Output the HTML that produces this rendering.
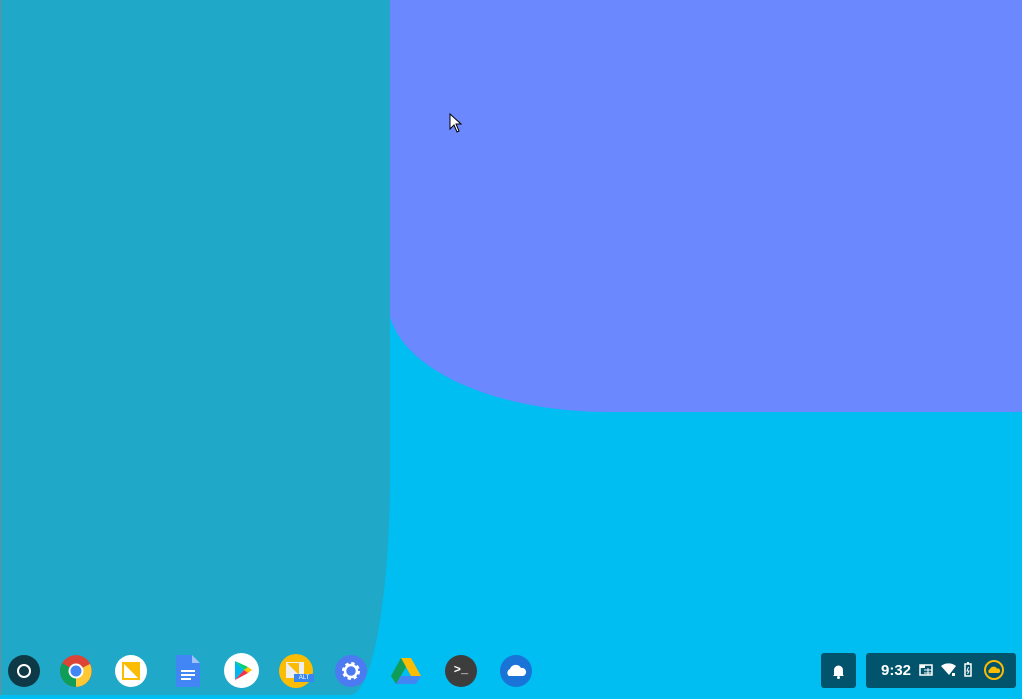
<!DOCTYPE html>
<html><head><style>
body{margin:0;width:1022px;height:695px;overflow:hidden;position:relative;background:#00bdf2;font-family:"Liberation Sans",sans-serif}
.a{position:absolute}
.ic{position:absolute;top:655px;width:32px;height:32px;border-radius:50%}
</style></head><body>
<div class="a" style="left:388px;top:0;width:640px;height:412px;background:#6b88fe;border-bottom-left-radius:220px 110px"></div>
<div class="a" style="left:0;top:0;width:390px;height:695px;background:#1fa8c8;border-bottom-right-radius:40px 220px"></div>
<div class="a" style="left:0;top:0;width:1px;height:695px;background:#6a8f99"></div>
<svg class="a" style="left:449px;top:113px" width="14" height="20"><path d="M1 1 L1 16 L5 12 L8 19 L10 18 L7 11 L12 11 Z" fill="#fff" stroke="#000" stroke-width="1"/></svg>

<div class="ic" style="left:8px;background:#0d3a46"><div class="a" style="left:9px;top:9px;width:10px;height:10px;border:2px solid #fff;border-radius:50%"></div></div>
<svg class="ic" style="left:60px" viewBox="0 0 32 32"><circle cx="16" cy="16" r="16" fill="#db4437"/><path d="M16 16 L30 9 A16 16 0 0 1 16 32 Z" fill="#fcc934"/><path d="M16 16 L16 32 A16 16 0 0 1 2 8 Z" fill="#0f9d58"/><circle cx="16" cy="16" r="7.5" fill="#fff"/><circle cx="16" cy="16" r="5.5" fill="#4285f4"/></svg>
<div class="ic" style="left:115px;background:#fff"><svg width="32" height="32"><rect x="8" y="8" width="16" height="16" fill="none" stroke="#fbbc04" stroke-width="2"/><path d="M9 9 L23 23 L23 9 Z" fill="#fbbc04"/></svg></div>
<svg class="ic" style="left:172px;border-radius:0" viewBox="0 0 32 32"><path d="M4 0 H20 L28 8 V32 H4 Z" fill="#4285f4"/><path d="M20 0 V8 H28 Z" fill="#a1c2fa"/><rect x="9" y="15" width="14" height="2" fill="#fff"/><rect x="9" y="19" width="14" height="2" fill="#fff"/><rect x="9" y="23" width="10" height="2" fill="#fff"/></svg>
<div class="ic" style="left:224px;top:653px;width:35px;height:35px;background:#fff"><svg width="35" height="35"><path d="M11 8 L20 17 L11 27 Z" fill="#00b7f0"/><path d="M11 8 L24 14 L20 17 Z" fill="#00d16e"/><path d="M20 17 L24 14 L28 17 L24 20 Z" fill="#ffc400"/><path d="M11 27 L20 17 L24 20 Z" fill="#f43249"/></svg></div>
<div class="ic" style="left:279px;top:654px;width:34px;height:34px;background:#fbbc04"><svg width="40" height="40"><rect x="7" y="8" width="18" height="16" fill="#eee"/><path d="M8 9 L20 21 L8 21 Z" fill="#fbbc04" transform="rotate(180 14 15)"/></svg><div class="a" style="left:15px;top:20px;width:20px;height:8px;background:#3a86f0;color:#fff;font-size:6px;line-height:8px;text-align:center">ALT</div></div>
<div class="ic" style="left:335px;background:#4c7bf1"><svg width="32" height="32" viewBox="0 0 32 32"><circle cx="16" cy="16" r="7" fill="none" stroke="#fff" stroke-width="4" stroke-dasharray="3 2.5"/><circle cx="16" cy="16" r="6" fill="none" stroke="#fff" stroke-width="2.5"/></svg></div>
<svg class="ic" style="left:390px;border-radius:0" viewBox="0 0 32 32"><path d="M11 3 H21 L31 21 H21 Z" fill="#fbbc04"/><path d="M11 3 L1 21 L6 29 L16 12 Z" fill="#0f9d58"/><path d="M6 29 H26 L31 21 H11 Z" fill="#4285f4"/></svg>
<div class="ic" style="left:445px;background:#3d3d3d;color:#fff;font-size:12px;font-family:'Liberation Mono',monospace;line-height:30px;text-align:center;font-weight:bold">&gt;_</div>
<div class="ic" style="left:500px;background:#1a73d6"><svg width="32" height="32"><path d="M9 21 A4 4 0 0 1 10 14 A6 6 0 0 1 21 13 A4 4 0 0 1 23 21 Z" fill="#fff"/></svg></div>

<div class="a" style="left:821px;top:653px;width:35px;height:35px;background:#02546d;border-radius:3px"><svg width="35" height="35"><path d="M13 22 V17 A4.5 4.5 0 0 1 22 17 V22 L23 23 H12 Z" fill="#fff"/><circle cx="17.5" cy="24.5" r="1.5" fill="#fff"/></svg></div>
<div class="a" style="left:866px;top:653px;width:150px;height:35px;background:#02546d;border-radius:3px">
<div class="a" style="left:15px;top:9px;color:#fff;font-size:15px;font-weight:bold">9:32</div>
<svg class="a" style="left:53px;top:11px" width="14" height="12"><rect x="1" y="1" width="12" height="10" fill="none" stroke="#fff" stroke-width="1.5"/><rect x="1" y="1" width="5" height="3" fill="#fff"/><path d="M5 6H13M5 9H13M9 4V11" stroke="#fff"/></svg>
<svg class="a" style="left:75px;top:10px" width="16" height="14"><path d="M0 3 A12 12 0 0 1 15 3 L8 12 Z" fill="#fff"/><rect x="10" y="9" width="5" height="5" fill="#02546d"/><rect x="11" y="10" width="3" height="3" fill="#fff"/></svg>
<svg class="a" style="left:98px;top:9px" width="8" height="16"><rect x="3" y="0" width="2" height="2" fill="#fff"/><rect x="1" y="2" width="6" height="12" fill="none" stroke="#fff" stroke-width="1.5"/><path d="M4.5 5 L3 9 H5 L3.5 12" stroke="#fff" fill="none"/></svg>
<div class="a" style="left:118px;top:7px;width:16px;height:16px;border:2.5px solid #fbbc04;border-radius:50%;background:#02546d"><svg width="16" height="16"><path d="M3 11 A2.5 2.5 0 0 1 4 7 A4 4 0 0 1 11 6.5 A2.5 2.5 0 0 1 13 11 Z" fill="#fbbc04"/></svg></div>
</div>
</body></html>
